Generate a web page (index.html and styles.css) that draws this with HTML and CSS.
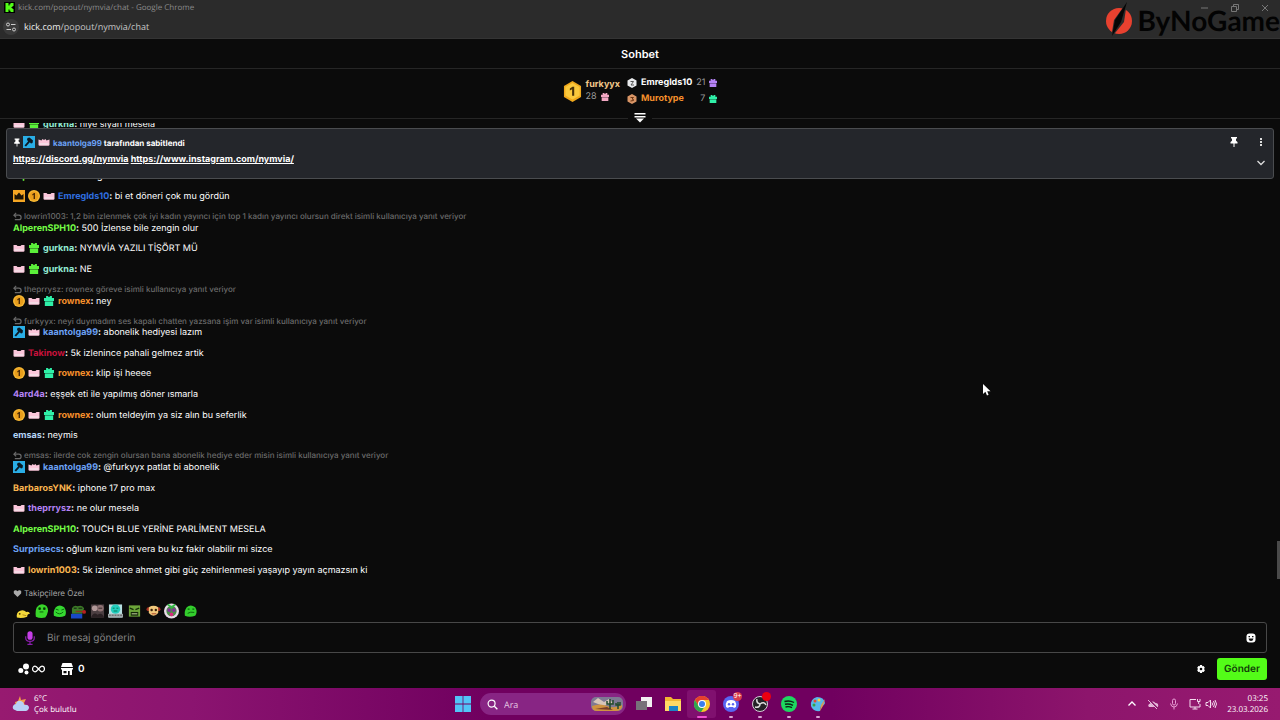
FILE: index.html
```html
<!DOCTYPE html>
<html lang="tr">
<head>
  <meta charset="UTF-8">
  <meta name="viewport" content="width=device-width, initial-scale=1.0">
  <title>kick.com/popout/nymvia/chat</title>
  <link rel="stylesheet" href="styles.css">
</head>
<body>

<!-- shared icons -->
<svg class="sprite" width="0" height="0" aria-hidden="true">
  <symbol id="lips" viewBox="0 0 12 12"><path d="M.5 3l3 0 1 1h3l1-1 3 0v6q-.3.700-1 .700H1.500q-.7 0-1-.7z" fill="#fbc6da"/><path d="M1.500 7h9v2h-9z" fill="#f6dbe6"/></symbol>
  <symbol id="crown-pink" viewBox="0 0 12 12"><path d="M.5 3.500l3 1 1-1.500 1.500 1 1.500-1 1 1.500 3-1V9q-.3.700-1 .700H1.500q-.7 0-1-.7z" fill="#fbc6da"/><path d="M1.500 7h9v2h-9z" fill="#f6dbe6"/></symbol>
  <symbol id="gift" viewBox="0 0 12 12"><path d="M2.500 0h2L6 1.500 7.500 0h2v2.500H12V6H0V2.500h2.500z" fill="currentColor"/><path d="M1 6.700h10V12H1z" fill="currentColor"/><path d="M1 6h10v1H1z" fill="currentColor" opacity=".5"/></symbol>
  <symbol id="hammer" viewBox="0 0 12 12"><path d="M0 0h12v12H0z" fill="#2aaee6"/><path d="M4.500 2l2-.500L10 4.500 9.500 7 8 7.500 6.800 6.300 3 10.500 1.500 9.500 5.200 5.200 4 4z" fill="#0b1a24"/></symbol>
  <symbol id="coin" viewBox="0 0 12 12"><circle cx="6" cy="6" r="6" fill="#f7b733"/><circle cx="6" cy="6" r="4.500" fill="#e99e1c"/><path d="M4.300 4.200L6 3h1v6H5.600V4.800l-1.300.7z" fill="#4b2a05"/></symbol>
  <symbol id="king" viewBox="0 0 12 12"><path d="M0 0h12v12H0z" fill="#f5a623"/><path d="M1.500 4l2 1.500L6 2.500l2.500 3 2-1.500V9.500h-9z" fill="#1d1405"/></symbol>
  <symbol id="reply" viewBox="0 0 10 10"><path d="M3.500 1L1 3.500 3.500 6M1 3.500h5.500a2.200 2.200 0 0 1 0 5H2" fill="none" stroke="currentColor" stroke-width="1.300"/></symbol>
  <symbol id="pin" viewBox="0 0 10 10"><path d="M2 0h6v1.500H7v2.300L8.500 5v1.500h-3V10h-1V6.500h-3V5L3 3.800V1.500H2z" fill="currentColor"/></symbol>
</svg>

<header class="browser">
  <div class="titlebar">
    <svg class="favicon" viewBox="0 0 11 11"><path d="M0 0h11v11H0z" fill="#000"/><path d="M1.500 1h3v2.500h1V2.300h1V1h3v3h-1v1h-1v1h1v1h1v3h-3V8.700h-1V7.500h-1V10h-3z" fill="#53fc18"/></svg>
    <span>kick.com/popout/nymvia/chat - Google Chrome</span>
    <div class="window-buttons">
      <button aria-label="Minimize"><svg viewBox="0 0 10 10"><path d="M1 5h7" stroke="currentColor"/></svg></button>
      <button aria-label="Restore"><svg viewBox="0 0 10 10"><path d="M1.500 3.500h5v5h-5zM3.500 3V1.500h5v5H7" fill="none" stroke="currentColor"/></svg></button>
      <button aria-label="Close"><svg viewBox="0 0 10 10"><path d="M2 2l6 6M8 2L2 8" stroke="currentColor"/></svg></button>
    </div>
  </div>
  <div class="address">
    <button class="site-info" aria-label="Site bilgileri"><svg viewBox="0 0 16 16"><path d="M8 5.500h4.500M3.500 10.500H8" stroke="#ccc" stroke-width="1.200"/><circle cx="5" cy="5.500" r="1.500" fill="none" stroke="#ccc"/><circle cx="11" cy="10.500" r="1.500" fill="none" stroke="#ccc"/></svg></button>
    <span><b>kick.com</b>/popout/nymvia/chat</span>
  </div>
</header>

<div class="sponsor">
  <svg viewBox="0 0 28 36"><circle cx="14" cy="19" r="13" fill="#e8412f"/><path d="M22 0L9 18 6 36 19 20z" fill="#2b2b2b"/><path d="M22 0L10 18 7 34 16 20z" fill="#050505"/></svg>
  <span>ByNoGame</span>
</div>

<main class="chat">
  <h1>Sohbet</h1>

  <section class="leaders">
    <div class="first">
      <svg class="medal" viewBox="0 0 20 22"><path d="M10 0l9 5.200v11.600L10 22l-9-5.200V5.200z" fill="#f0a81c"/><path d="M10 2l7.500 4.200v9L10 19.500l-7.500-4.300v-9z" fill="#fbc93c"/><path d="M7.200 7.800L10 6h1.800v9.500H9.600V8.700L7.200 10z" fill="#4a3208"/></svg>
      <div>
        <strong class="c-sand">furkyyx</strong>
        <span class="count">28 <svg class="c-pink"><use href="#gift"/></svg></span>
      </div>
    </div>
    <div class="others">
      <svg class="rank" viewBox="0 0 10 10"><path d="M5 0l4.500 2.500v5L5 10 .5 7.500v-5z" fill="#e8eaec"/><path d="M3.500 3.500h3L4 7h3" fill="none" stroke="#555"/></svg>
      <strong>Emreglds10</strong><span class="count">21</span><svg class="c-violet"><use href="#gift"/></svg>
      <svg class="rank" viewBox="0 0 10 10"><path d="M5 0l4.500 2.500v5L5 10 .5 7.500v-5z" fill="#d99566"/><path d="M3.500 3.500h3L5 5q2 0 1.500 1.500L3.500 7" fill="none" stroke="#6b3513"/></svg>
      <strong class="c-orange">Murotype</strong><span class="count">7</span><svg class="c-mint"><use href="#gift"/></svg>
    </div>
  </section>
  <div class="divider">
    <button aria-label="Genişlet"><svg viewBox="0 0 12 10"><path d="M.5 0h11v1.500H.5zM.5 3h11v1.500H.5zM2 5.500h8L6 9.500z" fill="#fff"/></svg></button>
  </div>

  <section class="feed">
    <ul class="messages">
      <li><p><svg><use href="#lips"/></svg><svg class="c-green"><use href="#gift"/></svg><b class="c-aqua">gurkna</b><b>:</b> niye siyah mesela</p></li>
      <li><p><b class="c-lime">AlperenSPH10</b><b>:</b> zengin olur mesela tabi</p></li>
      <li><p><svg><use href="#king"/></svg><svg><use href="#coin"/></svg><svg><use href="#lips"/></svg><b class="c-blue">Emreglds10</b><b>:</b> bi et döneri çok mu gördün</p></li>
      <li class="reply"><small><svg><use href="#reply"/></svg>lowrin1003: 1,2 bin izlenmek çok iyi kadın yayıncı için top 1 kadın yayıncı olursun direkt isimli kullanıcıya yanıt veriyor</small><p><b class="c-lime">AlperenSPH10</b><b>:</b> 500 İzlense bile zengin olur</p></li>
      <li><p><svg><use href="#lips"/></svg><svg class="c-green"><use href="#gift"/></svg><b class="c-aqua">gurkna</b><b>:</b> NYMVİA YAZILI TİŞÖRT MÜ</p></li>
      <li><p><svg><use href="#lips"/></svg><svg class="c-green"><use href="#gift"/></svg><b class="c-aqua">gurkna</b><b>:</b> NE</p></li>
      <li class="reply"><small><svg><use href="#reply"/></svg>theprrysz: rownex göreve isimli kullanıcıya yanıt veriyor</small><p><svg><use href="#coin"/></svg><svg><use href="#lips"/></svg><svg class="c-mint"><use href="#gift"/></svg><b class="c-orange">rownex</b><b>:</b> ney</p></li>
      <li class="reply"><small><svg><use href="#reply"/></svg>furkyyx: neyi duymadım ses kapalı chatten yazsana işim var isimli kullanıcıya yanıt veriyor</small><p><svg><use href="#hammer"/></svg><svg><use href="#crown-pink"/></svg><b class="c-steel">kaantolga99</b><b>:</b> abonelik hediyesi lazım</p></li>
      <li><p><svg><use href="#lips"/></svg><b class="c-red">Takinow</b><b>:</b> 5k izlenince pahali gelmez artik</p></li>
      <li><p><svg><use href="#coin"/></svg><svg><use href="#lips"/></svg><svg class="c-mint"><use href="#gift"/></svg><b class="c-orange">rownex</b><b>:</b> klip işi heeee</p></li>
      <li><p><b class="c-violet">4ard4a</b><b>:</b> eşşek eti ile yapılmış döner ısmarla</p></li>
      <li><p><svg><use href="#coin"/></svg><svg><use href="#lips"/></svg><svg class="c-mint"><use href="#gift"/></svg><b class="c-orange">rownex</b><b>:</b> olum teldeyim ya siz alın bu seferlik</p></li>
      <li><p><b class="c-sky">emsas</b><b>:</b> neymis</p></li>
      <li class="reply"><small><svg><use href="#reply"/></svg>emsas: ilerde cok zengin olursan bana abonelik hediye eder misin isimli kullanıcıya yanıt veriyor</small><p><svg><use href="#hammer"/></svg><svg><use href="#crown-pink"/></svg><b class="c-steel">kaantolga99</b><b>:</b> @furkyyx patlat bi abonelik</p></li>
      <li><p><b class="c-gold">BarbarosYNK</b><b>:</b> iphone 17 pro max</p></li>
      <li><p><svg><use href="#lips"/></svg><b class="c-violet">theprrysz</b><b>:</b> ne olur mesela</p></li>
      <li><p><b class="c-lime">AlperenSPH10</b><b>:</b> TOUCH BLUE YERİNE PARLİMENT MESELA</p></li>
      <li><p><b class="c-steel">Surprisecs</b><b>:</b> oğlum kızın ismi vera bu kız fakir olabilir mi sizce</p></li>
      <li><p><svg><use href="#lips"/></svg><b class="c-gold">lowrin1003</b><b>:</b> 5k izlenince ahmet gibi güç zehirlenmesi yaşayıp yayın açmazsın ki</p></li>
    </ul>

    <article class="pinned">
      <div class="pinned-body">
        <p class="pinned-by"><svg class="tack"><use href="#pin"/></svg><svg><use href="#hammer"/></svg><svg><use href="#crown-pink"/></svg><b class="c-steel">kaantolga99</b><b> tarafından sabitlendi</b></p>
        <p class="pinned-links"><a href="https://discord.gg/nymvia">https://discord.gg/nymvia</a> <a href="https://www.instagram.com/nymvia/">https://www.instagram.com/nymvia/</a></p>
      </div>
      <div class="pinned-actions">
        <button aria-label="Sabitlemeyi kaldır"><svg><use href="#pin"/></svg></button>
        <button aria-label="Menü"><svg viewBox="0 0 10 10"><path d="M4 1h2v2H4zM4 4h2v2H4zM4 7h2v2H4z" fill="#ddd"/></svg></button>
        <button class="expand" aria-label="Göster"><svg viewBox="0 0 10 10"><path d="M1.500 3L5 6.500 8.500 3" fill="none" stroke="#ddd" stroke-width="1.300"/></svg></button>
      </div>
    </article>
    <div class="scroll-thumb"></div>
  </section>

  <footer class="composer">
    <p class="followers"><svg viewBox="0 0 10 10"><path d="M5 9L1 5Q0 2.500 2 1.500 4 1 5 2.500 6 1 8 1.500q2 1 1 3.500z" fill="#aaa"/></svg>Takipçilere Özel</p>
    <div class="emotes">
      <button aria-label="duck"><svg viewBox="0 0 16 16"><path d="M2 15Q1 10 5 8q4-2 7 1 3-1 4 2-3 0-3 3-5 2-11 1z" fill="#f4d83b"/><circle cx="5" cy="11" r="1" fill="#4a3a00"/><path d="M8 12l4 1" stroke="#b58a12"/></svg></button>
      <button aria-label="blob"><svg viewBox="0 0 16 16"><path d="M2 14Q1 8 3 4 6 0 10 1q5 1 5 7-1 5-3 7-6 1-10-1z" fill="#39d62a"/><circle cx="6" cy="5.500" r="1.400" fill="#063b06"/><circle cx="11" cy="5.500" r="1.400" fill="#063b06"/><path d="M6 9h4" stroke="#0b570b"/></svg></button>
      <button aria-label="blob gülen"><svg viewBox="0 0 16 16"><path d="M2 13Q1 8 4 4 8 0 13 4q3 5 1 9-6 3-12 0z" fill="#35d831"/><path d="M4 6l3 1M10 7l3-1M4 9q4 4 8 0" fill="none" stroke="#0b610b"/></svg></button>
      <button aria-label="pepe"><svg viewBox="0 0 16 16"><path d="M1 11V5q2-4 6-2 5-2 7 2l-2 6z" fill="#3d7c28"/><path d="M0 11h12v5H0z" fill="#1948c6"/><path d="M3 5h3M8 5h4" stroke="#111"/><path d="M5 8.500h8" stroke="#87361d" stroke-width="1.500"/><circle cx="14" cy="9" r="2" fill="#b81f20"/></svg></button>
      <button aria-label="foto"><svg viewBox="0 0 16 16"><path d="M1 1h14v14H1z" fill="#4c3f42"/><circle cx="5" cy="5" r="3" fill="#b19898"/><circle cx="11" cy="5" r="3.500" fill="#8e7273"/><path d="M1 15q3-7 7-3 5-3 7 3z" fill="#292023"/><path d="M9 5h4" stroke="#32282a"/></svg></button>
      <button aria-label="klavye"><svg viewBox="0 0 16 16"><path d="M1 1h14v14H1z" fill="#b7dfe1"/><circle cx="8" cy="6" r="5" fill="#23cdbd"/><path d="M5 5h2M9 5h2M6 8h4" stroke="#075"/><path d="M0 11h16v4H0z" fill="#a2aaad"/><path d="M1 12.500h14" stroke="#555" stroke-dasharray="2 1"/></svg></button>
      <button aria-label="kızgın"><svg viewBox="0 0 16 16"><path d="M2 2h12v12H2z" fill="#6da63a"/><path d="M3 5l4 1.500M13 5L9 6.500" stroke="#152d09" stroke-width="1.500"/><path d="M4 9h8v4H4z" fill="#142609"/><path d="M5 11h6" stroke="#cfe2a8"/></svg></button>
      <button aria-label="maymun"><svg viewBox="0 0 16 16"><circle cx="2.500" cy="6" r="2" fill="#a32e20"/><circle cx="13.500" cy="6" r="2" fill="#a32e20"/><path d="M3 4q5-3 10 0v6q-5 6-10 0z" fill="#f1c87c"/><circle cx="6" cy="7" r="1.300" fill="#39210c"/><circle cx="10.500" cy="7" r="1.300" fill="#39210c"/><path d="M6 11h5" stroke="#a23c24"/></svg></button>
      <button aria-label="kulaklık"><svg viewBox="0 0 16 16"><circle cx="8" cy="8" r="8" fill="#e9dce9"/><circle cx="8" cy="8" r="5.500" fill="#4a8f4a"/><path d="M4 1l4 3 4-3" stroke="#32ba45" stroke-width="2" fill="none"/><circle cx="5.500" cy="7" r="2" fill="#872e9b"/><circle cx="10.500" cy="7" r="2" fill="#872e9b"/><ellipse cx="8" cy="11.500" rx="2" ry="2" fill="#d62a7b"/></svg></button>
      <button aria-label="blob üzgün"><svg viewBox="0 0 16 16"><path d="M2 13Q1 8 4 4 8 0 13 4q3 5 0 9-6 2-11 0z" fill="#33ce2d"/><path d="M5 6h2M10 6h2" stroke="#0b610b" stroke-width="1.500"/><path d="M5 10.500q3-2 7-1" fill="none" stroke="#0b610b"/></svg></button>
    </div>
    <div class="message-box">
      <svg viewBox="0 0 14 18"><rect x="4" y="1" width="6" height="10" rx="3" fill="#c63ee8"/><path d="M2 7v2q0 4 5 4t5-4V7M7 13v3M4 16.500h6" fill="none" stroke="#8b1fae" stroke-width="1.400"/></svg>
      <input type="text" placeholder="Bir mesaj gönderin" aria-label="Bir mesaj gönderin">
      <button aria-label="Emoji"><svg viewBox="0 0 10 10"><rect x=".5" y=".5" width="9" height="9" rx="3" fill="#fff"/><path d="M2.500 3h1.500v1.200H2.500zM6 3h1.500v1.200H6zM2.500 5.500h5Q7 8 5 8T2.500 5.500z" fill="#111"/></svg></button>
    </div>
    <div class="actions">
      <button class="points" aria-label="Puanlar"><svg viewBox="0 0 12 12"><circle cx="8" cy="3.500" r="3" fill="#fff"/><circle cx="2.800" cy="7.500" r="2.500" fill="#fff"/><circle cx="8.500" cy="9.500" r="2" fill="#fff"/></svg><svg class="infinity" viewBox="0 0 14 8"><path d="M7 4Q4.500 1 3.300 1a2.700 3 0 0 0 0 6Q4.500 7 7 4t3.700-3a2.700 3 0 0 1 0 6Q9.500 7 7 4z" fill="none" stroke="#fff" stroke-width="1.300"/></svg></button>
      <button class="shop"><svg viewBox="0 0 12 12"><path d="M1.500 0h9L12 4H0zM0 5h12v1.500H0z" fill="#fff"/><path d="M1 6h10v6H8.700V8H7v4H1zM2.500 8v2.300h3V8z" fill="#fff" fill-rule="evenodd"/></svg>0</button>
      <button class="settings" aria-label="Ayarlar"><svg viewBox="0 0 10 10"><path d="M4 1h2l.3 1.200L7.600 1.900l1.200 1.800L8 4.900l.9 1.400L7.700 8l-1.400-.2L6 9H4l-.3-1.200L2.300 8 1.200 6.300 2 4.900 1.200 3.700l1.200-1.800 1.300.3z" fill="#fff"/><circle cx="5" cy="5" r="1.300" fill="#0b0b0b"/></svg></button>
      <button class="send">Gönder</button>
    </div>
  </footer>
</main>

<footer class="taskbar">
  <div class="weather">
    <svg viewBox="0 0 18 18"><path d="M8 1l1 4 5-1-2 4 2 4H4l-1-5 3-1z" fill="#f3a04b"/><path d="M3 15q-3-1-2-4 1-2 3-2 1-4 5-3 3 1 3 4 4-1 5 2 0 3-3 4H5z" fill="#b9d0f5"/></svg>
    <p>6°C<br>Çok bulutlu</p>
  </div>
  <nav class="dock">
    <button class="app" aria-label="Başlat"><svg viewBox="0 0 16 16"><path d="M0 0h7.600v7.600H0zM8.400 0H16v7.600H8.400zM0 8.400h7.600V16H0zM8.400 8.400H16V16H8.400z" fill="#52c4f7"/></svg></button>
    <label class="search">
      <svg viewBox="0 0 12 12"><circle cx="5" cy="5" r="3.800" fill="none" stroke="#fff" stroke-width="1.300"/><path d="M8 8l3.300 3.300" stroke="#fff" stroke-width="1.500"/></svg>
      <input type="text" placeholder="Ara" aria-label="Ara">
      <svg class="desert" viewBox="0 0 32 16"><rect y="1" width="32" height="14" rx="5" fill="#7e7993"/><path d="M2 6l5-4 6 4 5-3 4 4-10 3z" fill="#d7c6b9"/><path d="M1 10q8-3 15 0t15-1v2q-1 4-6 4H6q-5 0-5-5z" fill="#cf9340"/><path d="M4 13l12-2 6 3z" fill="#793e2a"/><path d="M19 13V3M16 5v3h3M22 4v4h-3M27 13V6M25 7v2h4V6" fill="none" stroke="#234c2c" stroke-width="1.500"/></svg>
    </label>
    <button class="app" aria-label="Görev görünümü"><svg viewBox="0 0 16 16"><path d="M5 1h11v10H5z" fill="#f1eff1"/><path d="M0 5h11v9H0z" fill="#77717a"/></svg></button>
    <button class="app" aria-label="Dosya Gezgini"><svg viewBox="0 0 16 16"><path d="M0 1h6l2 2h8v12H0z" fill="#f2b632"/><path d="M0 5h16v10H0z" fill="#ffd966"/><path d="M4 10h9v5H4z" fill="#1c84c8"/></svg></button>
    <button class="app open active" aria-label="Chrome"><svg viewBox="0 0 16 16"><circle cx="8" cy="8" r="8" fill="#f8c62c"/><path d="M1 4a8 8 0 0 1 14 0H8L4.500 10z" fill="#e5402f"/><path d="M1 4a8 8 0 0 0 6 12l4-6H4.500z" fill="#2ea44f"/><circle cx="8" cy="8" r="4" fill="#fff"/><circle cx="8" cy="8" r="3" fill="#3b7ded"/></svg></button>
    <button class="app open" aria-label="Discord"><svg viewBox="0 0 16 16"><circle cx="8" cy="8" r="8" fill="#5865f2"/><path d="M4 5q4-2 8 0 2 3 1 6l-2 1-1-1H6l-1 1-2-1q-1-3 1-6z" fill="#fff"/><circle cx="6" cy="8.300" r="1.200" fill="#5865f2"/><circle cx="10" cy="8.300" r="1.200" fill="#5865f2"/></svg><span class="badge">9+</span></button>
    <button class="app open" aria-label="OBS"><svg viewBox="0 0 16 16"><circle cx="8" cy="8" r="7.500" fill="#242126" stroke="#d5ced6"/><path d="M8 8Q4 7 5 3M8 8q4-3 6 1M8 8q0 4-5 3" fill="none" stroke="#ddd" stroke-width="1.500"/></svg><span class="badge rec"></span></button>
    <button class="app open" aria-label="Spotify"><svg viewBox="0 0 16 16"><circle cx="8" cy="8" r="8" fill="#1ed760"/><path d="M3.500 5.500q5-1.500 9.500 1M4 8.300q4-1 8 1M4.500 11q3.500-1 6.500.700" fill="none" stroke="#0b2514" stroke-width="1.400"/></svg></button>
    <button class="app open" aria-label="Paint"><svg viewBox="0 0 16 16"><path d="M1 10Q0 3 7 1q7 0 8 6-1 3-4 3l-1 5q-7 1-9-5z" fill="#56b9e9"/><circle cx="5" cy="5" r="1.500" fill="#e24a33"/><circle cx="9" cy="4" r="1.500" fill="#f7d33c"/><circle cx="4" cy="9" r="1.500" fill="#38a046"/><path d="M15 3l-4 6-1 6 3-5z" fill="#d99a55"/></svg></button>
  </nav>
  <div class="tray">
    <svg viewBox="0 0 12 12"><path d="M2.500 7.500L6 4l3.500 3.500" fill="none" stroke="#fff" stroke-width="1.300"/></svg>
    <svg class="dim" viewBox="0 0 12 12"><path d="M2 9Q0 7 3 5.500 5 2 8.500 5 12 5 11 9z" fill="#e6b8da"/><path d="M1.500 1.500l9 9" stroke="#8d196d" stroke-width="2"/><path d="M1 2l9 9" stroke="#e6b8da"/></svg>
    <svg class="dim" viewBox="0 0 12 12"><rect x="4.500" y="1" width="3" height="6" rx="1.500" fill="none" stroke="#e79ed4"/><path d="M2.500 5.500Q3 9 6 9t3.500-3.500M6 9v2.500" fill="none" stroke="#e79ed4"/></svg>
    <svg class="net" viewBox="0 0 12 12"><path d="M7 1.500H1v7.500h10V6M3.500 11h5M6 9v2M8.500 1v2.500h2.500V1M9.700 3.500V6" fill="none" stroke="#f3dcee"/></svg>
    <svg viewBox="0 0 12 12"><path d="M1 4.500h2L5.500 2v8L3 7.500H1zM7 4.500q1 1.500 0 3M8.500 3q2 3 0 6M10 2q3 4 0 8" fill="none" stroke="#f3dcee"/></svg>
    <p>03:25<br>23.03.2026</p>
  </div>
</footer>

<svg class="pointer" viewBox="0 0 10 14"><path d="M1 1v10l2.400-2.200L5 12.500l1.600-.7L5.200 8.300h3.300z" fill="#fff"/></svg>

</body>
</html>
```
FILE: styles.css
```css
* {
  box-sizing: border-box;
}
body {
  margin: 0;
  height: 100vh;
  display: flex;
  flex-direction: column;
  overflow: hidden;
  position: relative;
  background: #0b0b0b;
  color: #fff;
  font-family: Inter, sans-serif;
  font-size: 9px;
  line-height: 12px;
  text-rendering: geometricPrecision;
}
p, h1, ul {
  margin: 0;
  padding: 0;
}
button {
  display: flex;
  align-items: center;
  padding: 0;
  border: 0;
  background: none;
  color: inherit;
  font: inherit;
  text-rendering: inherit;
}
input {
  border: 0;
  outline: 0;
  min-width: 0;
  padding: 0;
  background: none;
  color: #fff;
  font: inherit;
  text-rendering: inherit;
}
svg {
  flex: none;
  display: block;
}
.sprite {
  position: absolute;
}

/* name and badge colours */
.c-sand { color: #f3c98b; }
.c-pink { color: #f2a7c3; }
.c-violet { color: #b583f5; }
.c-orange { color: #f7902b; }
.c-mint { color: #2ff0a8; }
.c-green { color: #5bf03a; }
.c-aqua { color: #93ebd3; }
.c-lime { color: #75fd46; }
.c-blue { color: #2f6fe0; }
.c-steel { color: #6ba1f5; }
.c-red { color: #c9123c; }
.c-sky { color: #b4d6f7; }
.c-gold { color: #fbb650; }

/* browser window */
.browser {
  flex: none;
  height: 39px;
  background: #2b2b2b;
  border-bottom: 1px solid #343434;
  font-family: "Open Sans", sans-serif;
}
.titlebar {
  display: flex;
  align-items: center;
  gap: 3px;
  height: 15px;
  padding-left: 4px;
  font-size: 8px;
  color: #8a8a8a;
}
.favicon {
  width: 11px;
  height: 11px;
}
.window-buttons {
  display: flex;
  gap: 20px;
  margin-left: auto;
  padding-right: 10px;
  position: relative;
  z-index: 3;
  color: #777;
}
.window-buttons svg {
  width: 10px;
  height: 10px;
}
.address {
  display: flex;
  align-items: center;
  gap: 5px;
  height: 23px;
  padding-left: 3px;
  font-size: 9px;
  color: #c4c4c4;
}
.address b {
  font-weight: 400;
  color: #f0f0f0;
}
.site-info {
  border-radius: 50%;
  background: #3a3a3a;
}
.site-info svg {
  width: 16px;
  height: 16px;
}
.sponsor {
  position: absolute;
  top: 0;
  right: 0;
  z-index: 2;
  display: flex;
  align-items: center;
  gap: 4px;
  color: #030303;
  font: 700 28px/40px Lato, sans-serif;
}
.sponsor svg {
  width: 28px;
  height: 36px;
}

/* chat column */
.chat {
  flex: 1;
  min-height: 0;
  display: flex;
  flex-direction: column;
}
h1 {
  flex: none;
  height: 30px;
  border-bottom: 1px solid #262626;
  text-align: center;
  font-size: 11px;
  font-weight: 600;
  line-height: 30px;
}
.leaders {
  flex: none;
  display: flex;
  justify-content: center;
  align-items: center;
  gap: 7px;
  height: 44px;
}
.leaders strong {
  font-weight: 700;
}
.leaders svg {
  width: 8px;
  height: 8px;
}
.first {
  display: flex;
  align-items: center;
  gap: 4px;
}
.leaders .medal {
  width: 19px;
  height: 21px;
}
.first strong {
  display: block;
}
.count {
  display: flex;
  align-items: center;
  justify-content: flex-end;
  gap: 4px;
  color: #9a9a9a;
}
.first .count {
  justify-content: flex-start;
}
.others {
  display: grid;
  grid-template-columns: auto auto auto auto;
  align-items: center;
  gap: 4px;
}
.others .rank {
  width: 10px;
  height: 10px;
}
.divider {
  flex: none;
  display: flex;
  align-items: center;
  gap: 6px;
  height: 10px;
}
.divider::before,
.divider::after {
  content: "";
  flex: 1;
  height: 1px;
  background: #262626;
}
.divider svg {
  width: 12px;
  height: 10px;
}
.feed {
  flex: 1;
  min-height: 0;
  position: relative;
  overflow: hidden;
  display: flex;
}
.messages {
  flex: 1;
  display: flex;
  flex-direction: column;
  justify-content: space-between;
  margin-top: -9px;
  padding: 0 13px;
  list-style: none;
}
.messages li {
  flex: none;
  padding: 5px 0 3px;
}
.messages .reply {
  padding-top: 3px;
}
.messages li:first-child {
  margin-bottom: 31px;
}
.messages p,
.messages small,
.pinned-by {
  display: flex;
  align-items: center;
  height: 12px;
  white-space: pre;
}
.messages b,
.pinned-by b {
  font-weight: 700;
}
.messages p svg,
.pinned-by svg {
  width: 12px;
  height: 12px;
  margin: 0 3px 2px 0;
}
.messages p svg.c-mint,
.messages p svg.c-green {
  width: 10px;
  height: 10px;
  margin: 0 4px 2px 1px;
}
.messages small {
  height: 13px;
  color: #6a6a6a;
  font-size: 8px;
  font-weight: 500;
}
.messages small svg {
  width: 9px;
  height: 9px;
  margin-right: 2px;
}
.pinned {
  position: absolute;
  top: 5px;
  left: 6px;
  right: 6px;
  display: flex;
  justify-content: space-between;
  height: 51px;
  padding: 8px 6px;
  border: 1px solid #4a4c4f;
  border-radius: 3px;
  background: #24262b;
}
.pinned-by {
  font-size: 8px;
}
.pinned-by .tack {
  width: 8px;
  height: 9px;
  margin-right: 2px;
}
.pinned-links {
  margin-top: 5px;
  font-weight: 700;
}
.pinned-links a {
  color: #fff;
}
.pinned-actions {
  display: grid;
  grid-template-columns: auto auto;
  align-content: start;
  gap: 11px 17px;
  padding-right: 1px;
}
.pinned-actions svg {
  width: 10px;
  height: 10px;
}
.expand {
  grid-column: 2;
}
.scroll-thumb {
  position: absolute;
  right: 0;
  bottom: 1px;
  width: 3px;
  height: 38px;
  background: #4a4a4a;
}

/* composer */
.composer {
  flex: none;
  padding: 7px 13px 8px;
}
.followers {
  display: flex;
  align-items: center;
  gap: 2px;
  color: #a5a5a5;
  font-size: 8px;
}
.followers svg {
  width: 9px;
  height: 9px;
}
.emotes {
  display: flex;
  justify-content: space-between;
  width: 185px;
  margin-top: 4px;
  padding-left: 2px;
}
.emotes svg {
  width: 15px;
  height: 16px;
}
.message-box {
  display: flex;
  align-items: center;
  height: 31px;
  margin-top: 3px;
  padding: 0 10px;
  border: 1px solid #484848;
  border-radius: 3px;
}
.message-box > svg {
  width: 12px;
  height: 16px;
}
.message-box input {
  flex: 1;
  margin-left: 11px;
  font-size: 10px;
}
.message-box input::placeholder {
  color: #858585;
  opacity: 1;
}
.message-box button svg {
  width: 10px;
  height: 10px;
}
.actions {
  display: flex;
  align-items: center;
  margin-top: 5px;
}
.points {
  gap: 2px;
  margin-left: 5px;
}
.points svg,
.shop svg {
  width: 12px;
  height: 12px;
}
.points .infinity {
  width: 13px;
  height: 8px;
}
.shop {
  gap: 5px;
  margin-left: 16px;
  font-size: 10px;
  font-weight: 600;
}
.settings {
  margin-left: auto;
}
.settings svg {
  width: 10px;
  height: 10px;
}
.send {
  justify-content: center;
  width: 50px;
  height: 22px;
  margin-left: 11px;
  border-radius: 3px;
  background: #53fc18;
  color: #123d09;
  font-size: 10px;
  font-weight: 600;
}

/* taskbar */
.taskbar {
  flex: none;
  display: grid;
  grid-template-columns: 1fr auto 1fr;
  align-items: center;
  height: 32px;
  padding: 0 12px;
  background: linear-gradient(90deg, #971a70 0%, #8b1470 15%, #70005f 38%, #70005f 65%, #8d156c 85%, #971a70 100%);
  font-family: "Open Sans", sans-serif;
  font-size: 8px;
  line-height: 11px;
}
.weather {
  display: flex;
  align-items: center;
  gap: 4px;
}
.weather svg {
  width: 18px;
  height: 18px;
}
.dock {
  display: flex;
  align-items: center;
}
.app {
  position: relative;
  justify-content: center;
  width: 29px;
  height: 28px;
}
.app svg {
  width: 16px;
  height: 16px;
}
.app.active {
  border-radius: 3px;
  background: #80106f;
}
.app.open::after {
  content: "";
  position: absolute;
  bottom: 0;
  left: 50%;
  width: 4px;
  height: 2px;
  margin-left: -2px;
  border-radius: 1px;
  background: #d9a3d2;
}
.app.active::after {
  width: 10px;
  margin-left: -5px;
  background: #f04fd2;
}
.badge {
  position: absolute;
  top: 2px;
  right: 3px;
  min-width: 9px;
  height: 9px;
  border-radius: 5px;
  background: #d83b4b;
  font-size: 7px;
  line-height: 9px;
}
.rec {
  background: #ec0010;
}
.search {
  display: flex;
  align-items: center;
  gap: 6px;
  width: 146px;
  height: 22px;
  margin: 0 3px;
  padding: 0 3px 0 7px;
  border-radius: 11px;
  background: #882584;
}
.search svg {
  width: 11px;
  height: 11px;
}
.search input {
  flex: 1;
  font-size: 9px;
}
.search input::placeholder {
  color: #e3c4e0;
  opacity: 1;
}
.search .desert {
  width: 32px;
  height: 16px;
}
.tray {
  display: flex;
  justify-content: flex-end;
  align-items: center;
  gap: 4px;
}
.tray svg {
  width: 12px;
  height: 12px;
}
.tray .dim {
  margin-left: 5px;
}
.tray .net {
  margin-left: 5px;
}
.tray p {
  margin-left: 6px;
  text-align: right;
}

.pointer {
  position: absolute;
  top: 383px;
  left: 982px;
  width: 10px;
  height: 14px;
}
```
